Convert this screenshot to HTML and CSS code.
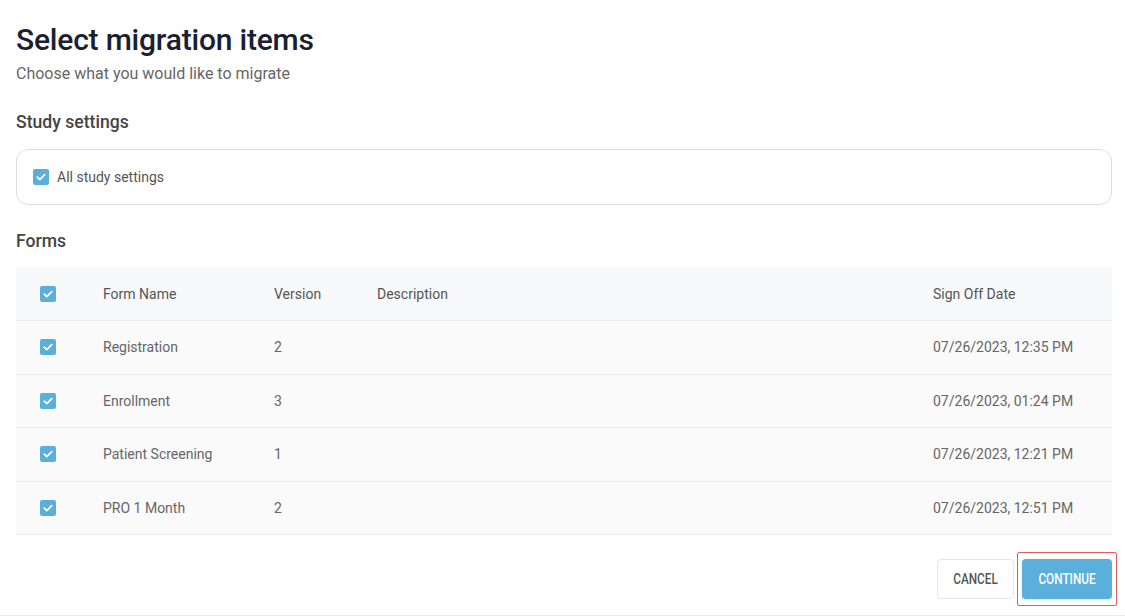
FILE: index.html
```html
<!DOCTYPE html>
<html lang="en">
<head>
<meta charset="utf-8">
<title>Select migration items</title>
<link rel="stylesheet" href="styles.css">
</head>
<body>
<div class="page">
  <h1 class="title">Select migration items</h1>
  <p class="subtitle">Choose what you would like to migrate</p>

  <h2 class="section">Study settings</h2>
  <div class="settings-box">
    <label class="check-label"><span class="cb"><svg viewBox="0 0 16 16"><path d="M4.3 8.2l2.5 2.4 4.9-5" /></svg></span>All study settings</label>
  </div>

  <h2 class="section forms-title">Forms</h2>
  <div class="table">
    <div class="row head">
      <div class="cell cb-cell"><span class="cb"><svg viewBox="0 0 16 16"><path d="M4.3 8.2l2.5 2.4 4.9-5" /></svg></span></div>
      <div class="cell">Form Name</div>
      <div class="cell">Version</div>
      <div class="cell">Description</div>
      <div class="cell">Sign Off Date</div>
    </div>
    <div class="row">
      <div class="cell cb-cell"><span class="cb"><svg viewBox="0 0 16 16"><path d="M4.3 8.2l2.5 2.4 4.9-5" /></svg></span></div>
      <div class="cell">Registration</div>
      <div class="cell">2</div>
      <div class="cell"></div>
      <div class="cell">07/26/2023, 12:35 PM</div>
    </div>
    <div class="row">
      <div class="cell cb-cell"><span class="cb"><svg viewBox="0 0 16 16"><path d="M4.3 8.2l2.5 2.4 4.9-5" /></svg></span></div>
      <div class="cell">Enrollment</div>
      <div class="cell">3</div>
      <div class="cell"></div>
      <div class="cell">07/26/2023, 01:24 PM</div>
    </div>
    <div class="row">
      <div class="cell cb-cell"><span class="cb"><svg viewBox="0 0 16 16"><path d="M4.3 8.2l2.5 2.4 4.9-5" /></svg></span></div>
      <div class="cell">Patient Screening</div>
      <div class="cell">1</div>
      <div class="cell"></div>
      <div class="cell">07/26/2023, 12:21 PM</div>
    </div>
    <div class="row">
      <div class="cell cb-cell"><span class="cb"><svg viewBox="0 0 16 16"><path d="M4.3 8.2l2.5 2.4 4.9-5" /></svg></span></div>
      <div class="cell">PRO 1 Month</div>
      <div class="cell">2</div>
      <div class="cell"></div>
      <div class="cell">07/26/2023, 12:51 PM</div>
    </div>
  </div>

  <div class="actions">
    <button class="btn btn-cancel"><span>CANCEL</span></button>
    <button class="btn btn-continue"><span>CONTINUE</span></button>
  </div>
</div>
</body>
</html>
```

FILE: styles.css
```css
* { box-sizing: border-box; }

html, body {
  margin: 0;
  padding: 0;
  background: #ffffff;
}

body {
  font-family: Roboto, "Noto Sans", "Liberation Sans", sans-serif;
  color: #555;
}

.page {
  height: 616px;
  padding: 22px 13px 0 16px;
  border-bottom: 1px solid #ececec;
  display: flex;
  flex-direction: column;
}

.title {
  margin: 0;
  font-size: 30px;
  line-height: 36px;
  font-weight: 500;
  color: #1a2030;
  letter-spacing: -0.2px;
}

.subtitle {
  margin: 6px 0 0;
  font-size: 16px;
  line-height: 20px;
  color: #666;
}

.section {
  margin: 26px 0 0;
  font-size: 17.6px;
  line-height: 24px;
  font-weight: 500;
  color: #444;
}

.settings-box {
  margin-top: 15px;
  height: 56px;
  border: 1px solid #dcdde3;
  border-radius: 12px;
  display: flex;
  align-items: center;
  padding-left: 16px;
}

.check-label {
  display: flex;
  align-items: center;
  gap: 8px;
  font-size: 14px;
  color: #555;
}

.cb {
  width: 16px;
  height: 16px;
  border-radius: 2px;
  background: #5aafdc;
  display: inline-flex;
  flex: none;
}

.cb svg {
  width: 16px;
  height: 16px;
  fill: none;
  stroke: #fff;
  stroke-width: 1.8;
  stroke-linecap: round;
  stroke-linejoin: round;
}

.forms-title {
  margin-top: 24px;
}

.table {
  margin-top: 14px;
}

.row {
  display: grid;
  grid-template-columns: 87px 171px 103px 556px 1fr;
  height: 53.5px;
  background: #fafafa;
  border-bottom: 1px solid #ececec;
  font-size: 14px;
  color: #666;
}

.row.head {
  height: 54px;
  background: #f8f9fb;
  color: #555;
}

.cell {
  display: flex;
  align-items: center;
}

.cb-cell {
  padding-left: 24px;
}

.actions {
  margin-top: 24px;
  display: flex;
  justify-content: flex-end;
  gap: 8px;
}

.btn {
  height: 40px;
  border-radius: 4px;
  font-family: Roboto, sans-serif;
  font-size: 14px;
  font-weight: 500;
  display: flex;
  align-items: center;
  justify-content: center;
  padding: 0;
  cursor: pointer;
}

.btn span {
  display: inline-block;
  transform: scaleX(0.84);
}

.btn-cancel {
  width: 77px;
  background: #fff;
  border: 1px solid #e6e6e6;
  color: #555;
}

.btn-continue {
  width: 90px;
  background: #5aafdb;
  border: none;
  color: #fff;
  position: relative;
  box-shadow: 0 1px 2px rgba(0,0,0,0.12);
}

.btn-continue::after {
  content: "";
  position: absolute;
  top: -7px;
  bottom: -7px;
  left: -5px;
  right: -5px;
  border: 1px solid #e35a5a;
  border-radius: 2px;
  pointer-events: none;
}
```
